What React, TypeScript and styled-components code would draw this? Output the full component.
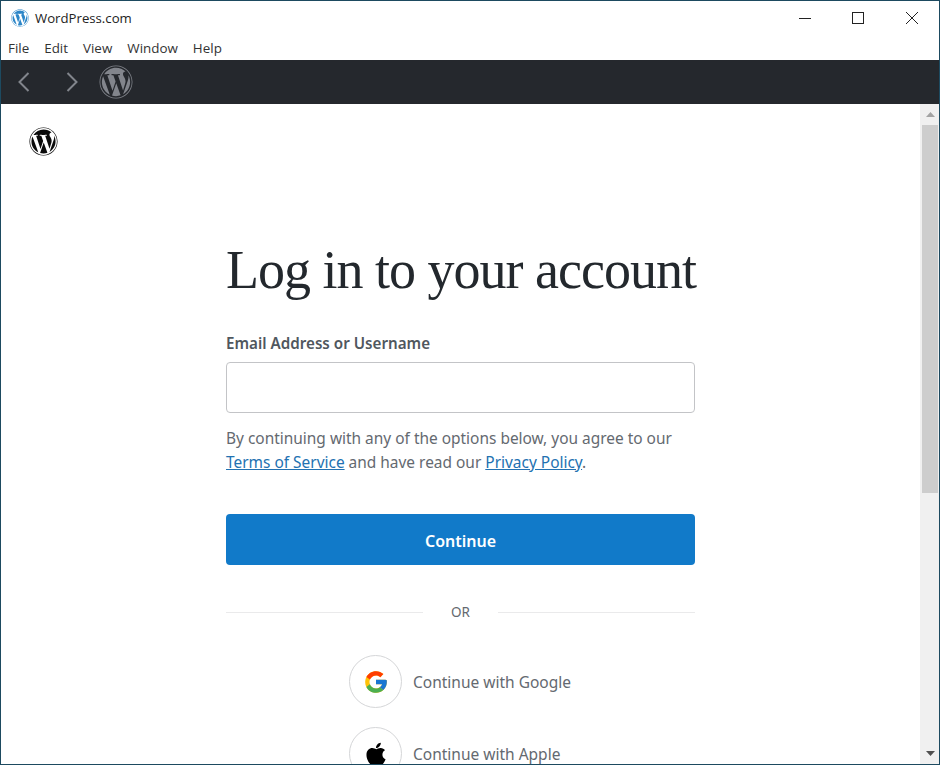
import styled, { createGlobalStyle } from "styled-components";
import { FaWordpress, FaApple } from "react-icons/fa";
import { FcGoogle } from "react-icons/fc";

const GlobalStyle = createGlobalStyle`
  html, body {
    margin: 0;
    padding: 0;
    overflow: hidden;
    background: #fff;
  }
  * {
    box-sizing: border-box;
  }
`;

const Window = styled.div`
  width: 940px;
  height: 765px;
  border: 1px solid #1d4a60;
  display: flex;
  flex-direction: column;
  overflow: hidden;
  font-family: "Noto Sans", "Open Sans", sans-serif;
  background: #fff;
`;

const TitleBar = styled.div`
  height: 32px;
  flex: none;
  display: flex;
  align-items: center;
  padding: 2px 0 0 10px;
  font-family: "Open Sans", "Noto Sans", sans-serif;
  font-size: 13.2px;
  color: #222;
`;

const TitleIcon = styled.span`
  display: flex;
  color: #2c86c8;
  font-size: 18px;
  margin-right: 6px;
`;

const TitleText = styled.span`
  flex: 1;
`;

const WinButton = styled.div`
  width: 54px;
  height: 30px;
  display: flex;
  align-items: center;
  justify-content: center;
  color: #222;
`;

const MenuBar = styled.div`
  height: 27px;
  flex: none;
  display: flex;
  align-items: center;
  padding: 3px 0 0 7px;
  gap: 15px;
  font-family: "Open Sans", "Noto Sans", sans-serif;
  font-size: 13.4px;
  color: #333;
`;

const Toolbar = styled.div`
  height: 44px;
  flex: none;
  background: #25282d;
  display: flex;
  align-items: center;
  padding-left: 17px;
  color: #82858c;
`;

const NavButton = styled.div`
  width: 48px;
  display: flex;
`;

const ToolbarLogo = styled.span`
  display: flex;
  font-size: 34px;
  margin-left: -15px;
`;

const Content = styled.div`
  flex: 1;
  min-height: 0;
  display: flex;
`;

const Main = styled.main`
  flex: 1;
  min-width: 0;
  padding: 23px 0 0 28px;
  overflow: hidden;
`;

const PageLogo = styled.div`
  display: flex;
  font-size: 29px;
  color: #0a0a0a;
  height: 30px;
`;

const Form = styled.div`
  width: 469px;
  margin: 83px 0 0 197px;
`;

const Heading = styled.h1`
  margin: 0;
  font-family: "Liberation Serif", serif;
  font-weight: 400;
  font-size: 54px;
  line-height: 60px;
  letter-spacing: -1px;
  color: #23282d;
  white-space: nowrap;
`;

const Label = styled.label`
  display: block;
  margin-top: 33px;
  font-size: 15.2px;
  line-height: 20px;
  font-weight: 600;
  color: #50575e;
`;

const Input = styled.input`
  display: block;
  width: 100%;
  height: 51px;
  margin-top: 9px;
  border: 1px solid #c3c4c7;
  border-radius: 4px;
  background: #fff;
`;

const Terms = styled.p`
  margin: 13px 0 0;
  font-size: 15.45px;
  line-height: 24px;
  color: #646970;
  white-space: nowrap;
`;

const TermsLink = styled.a`
  color: #2271b1;
  text-decoration: underline;
`;

const PrimaryButton = styled.button`
  display: block;
  width: 100%;
  height: 51px;
  margin-top: 40px;
  padding: 2px 0 0;
  border: 0;
  border-radius: 4px;
  background: #117ac9;
  color: #fff;
  font-family: inherit;
  font-size: 16px;
  font-weight: 600;
`;

const Divider = styled.div`
  display: flex;
  align-items: center;
  gap: 28px;
  margin-top: 37px;
  font-size: 13.5px;
  line-height: 20px;
  color: #646970;
`;

const DividerLine = styled.span`
  flex: 1;
  height: 1px;
  background: #eaeaeb;
`;

const Socials = styled.div`
  display: flex;
  flex-direction: column;
  gap: 19px;
  margin-top: 33px;
  margin-left: 123px;
`;

const SocialRow = styled.div`
  display: flex;
  align-items: center;
  gap: 11px;
  font-size: 15.5px;
  color: #646970;
`;

const SocialIcon = styled.span`
  width: 53px;
  height: 53px;
  border: 1px solid #d5d6d8;
  border-radius: 50%;
  display: flex;
  align-items: center;
  justify-content: center;
  font-size: 26px;
  color: #000;
  flex: none;
`;

const Scrollbar = styled.div`
  width: 19px;
  flex: none;
  background: #f0f0f0;
  display: flex;
  flex-direction: column;
  align-items: center;
  padding: 0 1px 0 2px;
`;

const ScrollArrow = styled.div`
  height: 21px;
  flex: none;
  display: flex;
  align-items: center;
  justify-content: center;
`;

const ScrollThumb = styled.div`
  width: 100%;
  height: 368px;
  background: #cdcdcd;
`;

const ScrollSpace = styled.div`
  flex: 1;
`;

export default function App() {
  return (
    <Window>
      <GlobalStyle />
      <TitleBar>
        <TitleIcon>
          <FaWordpress />
        </TitleIcon>
        <TitleText>WordPress.com</TitleText>
        <WinButton>
          <svg width="12" height="12" viewBox="0 0 12 12" overflow="visible">
            <path d="M1 6.5h12" stroke="currentColor" fill="none" />
          </svg>
        </WinButton>
        <WinButton>
          <svg width="12" height="12" viewBox="0 0 12 12">
            <rect x="0.5" y="0.5" width="11" height="11" stroke="currentColor" fill="none" />
          </svg>
        </WinButton>
        <WinButton>
          <svg width="12" height="12" viewBox="0 0 12 12">
            <path d="M0 0l12 12M12 0L0 12" stroke="currentColor" fill="none" />
          </svg>
        </WinButton>
      </TitleBar>
      <MenuBar>
        <span>File</span>
        <span>Edit</span>
        <span>View</span>
        <span>Window</span>
        <span>Help</span>
      </MenuBar>
      <Toolbar>
        <NavButton>
          <svg width="12" height="20" viewBox="0 0 12 20">
            <path d="M10.5 1L1.5 10l9 9" stroke="currentColor" strokeWidth="2" fill="none" />
          </svg>
        </NavButton>
        <NavButton>
          <svg width="12" height="20" viewBox="0 0 12 20">
            <path d="M1.5 1l9 9-9 9" stroke="currentColor" strokeWidth="2" fill="none" />
          </svg>
        </NavButton>
        <ToolbarLogo>
          <FaWordpress />
        </ToolbarLogo>
      </Toolbar>
      <Content>
        <Main>
          <PageLogo>
            <FaWordpress />
          </PageLogo>
          <Form>
            <Heading>Log in to your account</Heading>
            <Label>Email Address or Username</Label>
            <Input />
            <Terms>
              By continuing with any of the options below, you agree to our
              <br />
              <TermsLink>Terms of Service</TermsLink> and have read our{" "}
              <TermsLink>Privacy Policy</TermsLink>.
            </Terms>
            <PrimaryButton>Continue</PrimaryButton>
            <Divider>
              <DividerLine />
              OR
              <DividerLine />
            </Divider>
            <Socials>
              <SocialRow>
                <SocialIcon>
                  <FcGoogle />
                </SocialIcon>
                Continue with Google
              </SocialRow>
              <SocialRow>
                <SocialIcon>
                  <FaApple />
                </SocialIcon>
                Continue with Apple
              </SocialRow>
            </Socials>
          </Form>
        </Main>
        <Scrollbar>
          <ScrollArrow>
            <svg width="9" height="5" viewBox="0 0 9 5">
              <path d="M4.5 0L9 5H0z" fill="#a3a3a3" />
            </svg>
          </ScrollArrow>
          <ScrollThumb />
          <ScrollSpace />
          <ScrollArrow>
            <svg width="9" height="5" viewBox="0 0 9 5">
              <path d="M0 0h9L4.5 5z" fill="#505050" />
            </svg>
          </ScrollArrow>
        </Scrollbar>
      </Content>
    </Window>
  );
}
